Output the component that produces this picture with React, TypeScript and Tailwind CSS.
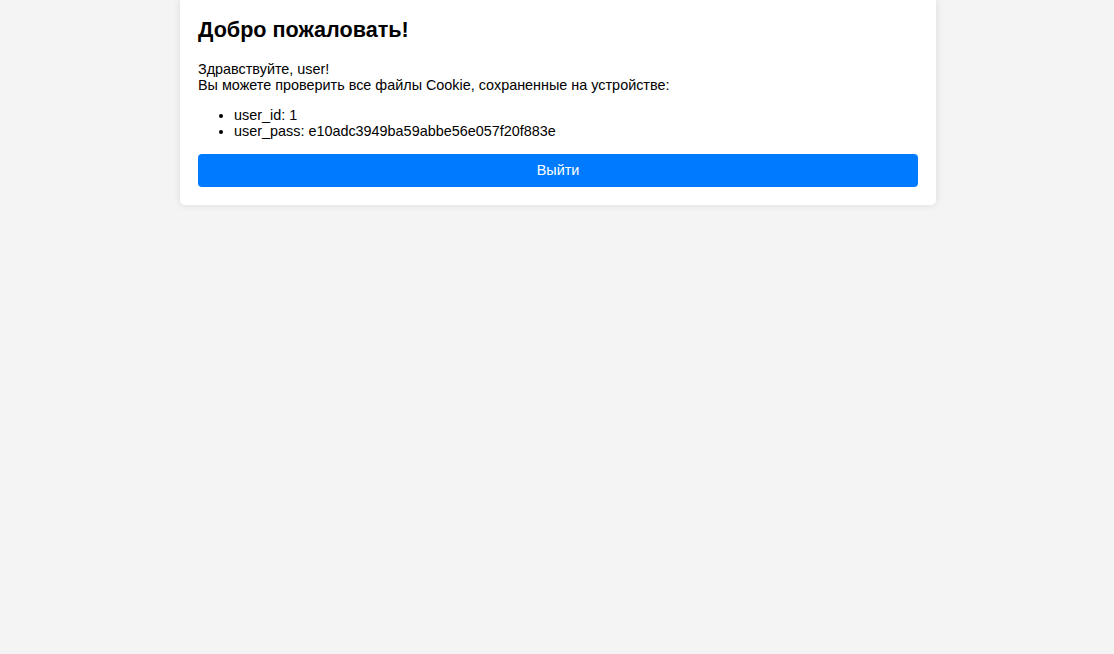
export default function App() {
  return (
    <div className="min-h-[654px] w-full bg-[#f4f4f4] pl-[2px] text-black" style={{ fontFamily: '"Liberation Sans", Arial, sans-serif' }}>
      <div className="mx-auto w-[756px] rounded-b-[5px] bg-white px-[18px] pt-[15px] pb-[18px] shadow-[0_0_8px_rgba(0,0,0,0.1)]">
        <h2 className="mt-[2px] text-[21.6px] font-bold leading-[26px]">Добро пожаловать!</h2>
        <p className="mt-[18px] text-[14.4px] leading-[16px]">
          Здравствуйте, user!
          <br />
          Вы можете проверить все файлы Cookie, сохраненные на устройстве:
        </p>
        <ul className="mt-[14px] list-disc pl-[36px] text-[14.4px] leading-[16px]">
          <li>user_id: 1</li>
          <li>user_pass: e10adc3949ba59abbe56e057f20f883e</li>
        </ul>
        <button className="mt-[15px] block h-[33px] w-full rounded-[4px] bg-[#007bff] text-[14.4px] text-white">
          Выйти
        </button>
      </div>
    </div>
  );
}
